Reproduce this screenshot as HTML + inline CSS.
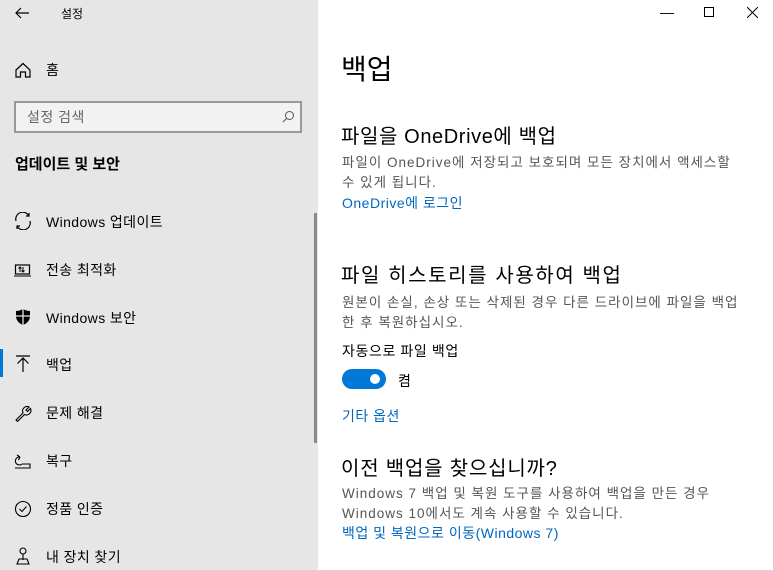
<!DOCTYPE html>
<html><head><meta charset="utf-8"><style>
*{margin:0;padding:0;box-sizing:border-box}
body{width:773px;height:570px;overflow:hidden;background:#fff;font-family:"Liberation Sans","Noto Sans CJK KR",sans-serif;color:#000;position:relative}
.side{position:absolute;left:0;top:0;width:318px;height:570px;background:#e6e6e6}
.a{position:absolute;white-space:nowrap}
.ic{position:absolute;left:14px;width:18px;height:18px}
.nav{position:absolute;left:46px;font-size:14px;letter-spacing:0.4px}
.m{font-size:13.5px;color:#555;line-height:20px;letter-spacing:1px}
.lk{color:#0067c0;font-size:14px;letter-spacing:0.5px}
h2{font-weight:normal;font-size:20px;letter-spacing:1.2px}
</style></head><body>
<div class="side">
<svg class="a" style="left:14px;top:6px" width="16" height="14" viewBox="0 0 16 14"><path d="M15 7H2M7 2L2 7l5 5" stroke="#000" fill="none" stroke-width="1.2"/></svg>
<div class="a" style="left:61px;top:5px;font-size:12px">설정</div>
<svg class="ic" style="top:61px" viewBox="0 0 18 18"><path d="M2 9L9 2.5 16 9v7h-4.5v-5h-5v5H2z" stroke="#000" fill="none" stroke-width="1.2"/></svg>
<div class="nav" style="top:60px">홈</div>
<div class="a" style="left:14px;top:101px;width:288px;height:32px;border:2px solid #999;background:#f2f2f2"></div>
<div class="a" style="left:27px;top:107px;font-size:14px;color:#666;letter-spacing:0.5px">설정 검색</div>
<svg class="a" style="left:282px;top:110px" width="13" height="13" viewBox="0 0 13 13"><circle cx="7.5" cy="5.5" r="4" stroke="#555" fill="none"/><path d="M4.5 8.5L1 12" stroke="#555"/></svg>
<div class="a" style="left:15px;top:153px;font-size:15px;font-weight:bold">업데이트 및 보안</div>
<svg class="ic" style="top:212px" viewBox="0 0 18 18"><path d="M15 4A7 7 0 0 0 2 9M3 14a7 7 0 0 0 13-5M15 1v3h-3M3 17v-3h3" stroke="#000" fill="none" stroke-width="1.2"/></svg>
<div class="nav" style="top:212px">Windows 업데이트</div>
<svg class="ic" style="top:261px" viewBox="0 0 18 18"><rect x="1.5" y="4" width="14" height="9" stroke="#000" fill="none" stroke-width="1.2"/><path d="M0 15h17M6 6v5M9 6v5M4.5 7.5L6 6l1.5 1.5M7.5 9.5L9 11l1.5-1.5" stroke="#000" fill="none"/></svg>
<div class="nav" style="top:260px">전송 최적화</div>
<svg class="ic" style="top:308px" viewBox="0 0 18 18"><path d="M9 1c3 1.5 5 2 7 2v5c0 5-4 8-7 9-3-1-7-4-7-9V3c2 0 4-.5 7-2z" fill="#000"/><path d="M9 1v16M2 8h14" stroke="#e6e6e6" stroke-width="1.3"/></svg>
<div class="nav" style="top:308px">Windows 보안</div>
<div class="a" style="left:0;top:349px;width:3px;height:28px;background:#0078d7"></div>
<svg class="ic" style="top:355px" viewBox="0 0 18 18"><path d="M2 1h14M9 17V3M3.5 8.5L9 3l5.5 5.5" stroke="#000" fill="none" stroke-width="1.2"/></svg>
<div class="nav" style="top:355px">백업</div>
<svg class="ic" style="top:404px" viewBox="0 0 18 18"><path d="M2 16l7-7a4.5 4.5 0 0 1 6-6l-3 3 1.5 1.5 3-3a4.5 4.5 0 0 1-6 6l-7 7z" stroke="#000" fill="none" stroke-width="1.1"/></svg>
<div class="nav" style="top:403px">문제 해결</div>
<svg class="ic" style="top:452px" viewBox="0 0 18 18"><path d="M1 16h15v-4H8M6 5a4 4 0 1 0 2 7M6 5L3 3M6 5L4.5 8" stroke="#000" fill="none" stroke-width="1.1"/></svg>
<div class="nav" style="top:451px">복구</div>
<svg class="ic" style="top:500px" viewBox="0 0 18 18"><circle cx="9" cy="9" r="7.5" stroke="#000" fill="none" stroke-width="1.1"/><path d="M5.5 9l2.5 2.5 4.5-5" stroke="#000" fill="none" stroke-width="1.1"/></svg>
<div class="nav" style="top:499px">정품 인증</div>
<svg class="ic" style="top:547px" viewBox="0 0 18 18"><circle cx="9" cy="4" r="3" stroke="#000" fill="none" stroke-width="1.1"/><path d="M9 7v6M3 17l2-5h8l2 5z" stroke="#000" fill="none" stroke-width="1.1"/></svg>
<div class="nav" style="top:547px">내 장치 찾기</div>
<div class="a" style="left:314px;top:213px;width:3px;height:230px;background:#8a8a8a"></div>
</div>
<div class="a" style="left:660px;top:4px;font-size:14px">&#8212;</div>
<div class="a" style="left:704px;top:7px;width:10px;height:10px;border:1px solid #000"></div>
<svg class="a" style="left:747px;top:7px" width="11" height="11"><path d="M0 0L11 11M11 0L0 11" stroke="#000"/></svg>
<div class="a" style="left:341px;top:48px;font-size:28px">백업</div>
<h2 class="a" style="left:341px;top:120px;letter-spacing:0.6px">파일을 OneDrive에 백업</h2>
<div class="a m" style="left:342px;top:153px">파일이 OneDrive에 저장되고 보호되며 모든 장치에서 액세스할<br>수 있게 됩니다.</div>
<div class="a lk" style="left:342px;top:193px">OneDrive에 로그인</div>
<h2 class="a" style="left:341px;top:259px;letter-spacing:1.6px">파일 히스토리를 사용하여 백업</h2>
<div class="a m" style="left:342px;top:293px">원본이 손실, 손상 또는 삭제된 경우 다른 드라이브에 파일을 백업<br>한 후 복원하십시오.</div>
<div class="a" style="left:342px;top:341px;font-size:14px;letter-spacing:0.6px">자동으로 파일 백업</div>
<div class="a" style="left:342px;top:369px;width:44px;height:20px;border-radius:10px;background:#0078d7"></div>
<div class="a" style="left:370px;top:374px;width:10px;height:10px;border-radius:5px;background:#fff"></div>
<div class="a" style="left:398px;top:371px;font-size:14px">켬</div>
<div class="a lk" style="left:342px;top:406px">기타 옵션</div>
<h2 class="a" style="left:341px;top:452px;letter-spacing:0.8px">이전 백업을 찾으십니까?</h2>
<div class="a m" style="left:342px;top:484px">Windows 7 백업 및 복원 도구를 사용하여 백업을 만든 경우<br>Windows 10에서도 계속 사용할 수 있습니다.</div>
<div class="a lk" style="left:342px;top:523px">백업 및 복원으로 이동(Windows 7)</div>
</body></html>
